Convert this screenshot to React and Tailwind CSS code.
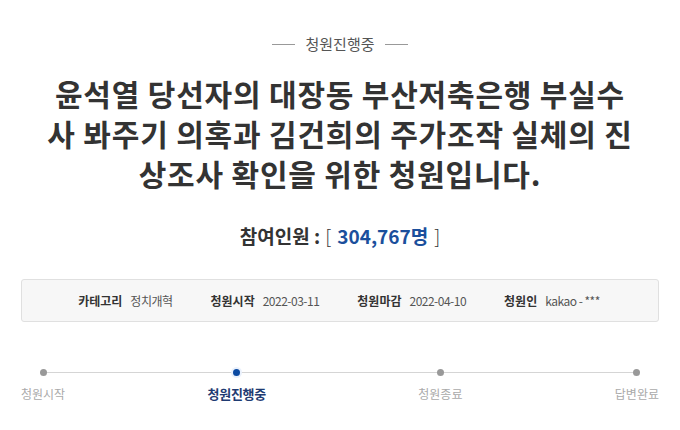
import React from 'react';

const InfoItem = ({ label, value }) => (
  <div className="flex items-center gap-2">
    <span className="font-bold text-[#333]">{label}</span>
    <span className="text-[#555] tracking-[-0.5px]">{value}</span>
  </div>
);

const steps = [
  { label: '청원시작', active: false },
  { label: '청원진행중', active: true },
  { label: '청원종료', active: false },
  { label: '답변완료', active: false },
];

export default function App() {
  return (
    <div className="w-[680px] h-[430px] bg-white overflow-hidden font-['Noto_Sans_CJK_KR',sans-serif]">
      <div className="pt-[33px] flex items-center justify-center gap-[10px]">
        <span className="w-[23px] h-px bg-[#999]" />
        <span className="text-[15px] leading-[22px] text-[#555]">청원진행중</span>
        <span className="w-[23px] h-px bg-[#999]" />
      </div>

      <h1 className="mt-[18px] text-center text-[30px] leading-[40px] font-bold text-[#333] tracking-[0.8px]">
        <span className="block whitespace-nowrap">윤석열 당선자의 대장동 부산저축은행 부실수</span>
        <span className="block whitespace-nowrap">사 봐주기 의혹과 김건희의 주가조작 실체의 진</span>
        <span className="block whitespace-nowrap">상조사 확인을 위한 청원입니다.</span>
      </h1>

      <div className="mt-[29px] flex items-center justify-center text-[19px] leading-[28px] text-[#333]">
        <span className="font-bold">참여인원 : </span>
        <span className="ml-[5px] font-light">[</span>
        <span className="ml-[6px] font-bold text-[#1b4f9c]">304,767명</span>
        <span className="ml-[6px] font-light">]</span>
      </div>

      <div className="mx-[21px] mt-[29px] h-[43px] rounded-[3px] border border-[#e0e0e0] bg-[#f7f7f7] flex items-center justify-center gap-[38px] text-[12px] pr-[2px]">
        <InfoItem label="카테고리" value="정치개혁" />
        <InfoItem label="청원시작" value="2022-03-11" />
        <InfoItem label="청원마감" value="2022-04-10" />
        <InfoItem label="청원인" value="kakao - ***" />
      </div>

      <div className="relative mx-[21px] mt-[45px] flex justify-between">
        <div className="absolute left-[21px] right-[21px] top-[5px] h-px bg-[#d5d5d5]" />
        {steps.map((s) => (
          <div key={s.label} className={s.active ? 'relative flex flex-col items-center -ml-[10px]' : 'relative flex flex-col items-center'}>
            {s.active ? (
              <span className="w-[11px] h-[11px] rounded-full bg-[#eaf1fc] flex items-center justify-center">
                <span className="w-[7px] h-[7px] rounded-full bg-[#0b4aa2]" />
              </span>
            ) : (
              <span className="w-[11px] h-[11px] flex items-center justify-center">
                <span className="w-[7px] h-[7px] rounded-full bg-[#999]" />
              </span>
            )}
            <span
              className={
                s.active
                  ? 'mt-[6px] text-[13px] leading-[20px] font-bold text-[#1f3b72] tracking-[-0.3px]'
                  : 'mt-[6px] text-[12px] leading-[20px] text-[#aaa]'
              }
            >
              {s.label}
            </span>
          </div>
        ))}
      </div>
    </div>
  );
}
